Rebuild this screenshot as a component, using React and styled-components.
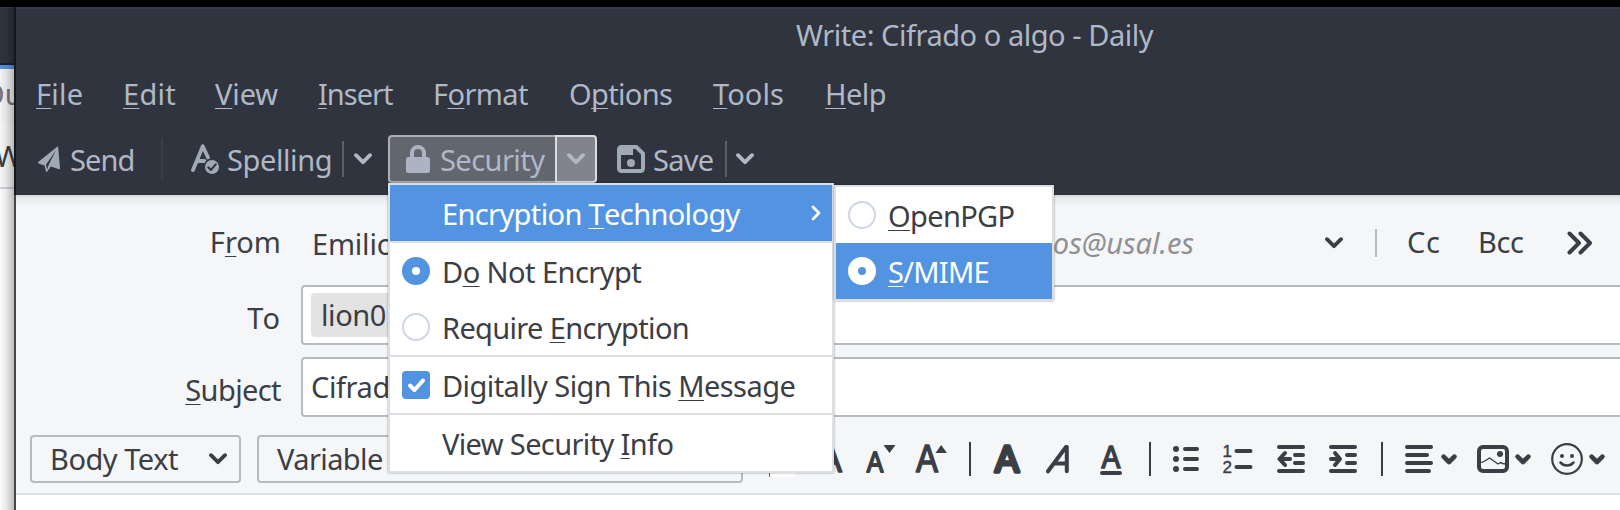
import React from 'react';
import styled, { createGlobalStyle, css } from 'styled-components';

const c = {
  header: '#2f343f', headerText: '#afb8c6', headerIcon: '#a0aab7',
  panel: '#f4f6f8', text: '#3b3e45', border: '#b9babb', line: '#dcdfe3', accent: '#5294e2',
};

const GlobalStyle = createGlobalStyle`
  *, *::before, *::after { box-sizing: border-box; }
  body {
    margin: 0; overflow: hidden; background: #fff;
    font: 400 29px/36px "Noto Sans", "Open Sans", sans-serif;
    color: ${c.text};
  }
  svg { display: block; flex: none; }
`;

const Screen = styled.div`
  display: flex; flex-direction: column;
  width: 1620px; height: 510px; overflow: hidden;
`;
const TopEdge = styled.div`height: 7px; flex: none; background: #000;`;
const Desktop = styled.div`display: flex; flex: 1; min-height: 0; position: relative;`;

const BackWindow = styled.div`
  width: 14px; flex: none; overflow: hidden; position: relative;
  display: flex; flex-direction: column; background: #fbfbfb;
  &::after {
    content: ''; position: absolute; inset: 0;
    background: linear-gradient(90deg, transparent, rgba(0,0,0,.08) 45%, rgba(0,0,0,.25));
  }
`;
const BackHeader = styled.div`
  height: 62px; flex: none; background: ${c.header};
  border-top: 1px solid #3a404c; border-bottom: 4px solid ${c.accent};
  box-shadow: inset 0 -2px #1e222b;
`;
const BackTab = styled.div`
  height: 55px; flex: none; display: flex; align-items: center; text-indent: -18px;
  white-space: nowrap; background: #f4f4f4; color: #74767a; padding-bottom: 6px;
`;
const BackRow = styled.div`
  height: 63px; flex: none; display: flex; align-items: center;
  text-indent: -5px; background: #f7f7f8;
`;
const BackBody = styled.div`flex: 1; border-top: 2px solid #cfd3d8;`;

const Window = styled.main`
  flex: 1; min-width: 0; display: flex; flex-direction: column;
  border-left: 2px solid #464646; background: #fff;
`;
const Header = styled.header`
  height: 188px; flex: none; margin-left: -2px; border-left: 2px solid #14171c;
  background: ${c.header}; color: ${c.headerText};
  box-shadow: inset 0 2px #363d49;
`;
const TitleBar = styled.div`
  height: 53px; display: flex; align-items: center; padding: 2px 0 0 780px;
  letter-spacing: -0.46px; white-space: nowrap;
`;
const MenuBar = styled.nav`height: 65px; display: flex; align-items: center; padding: 3px 0 0 20px;`;
const MenuName = styled.span`width: ${p => p.$w}px; flex: none; letter-spacing: ${p => p.$ls}px;`;
const Key = styled.span`
  text-decoration: underline; text-decoration-thickness: 1px;
  text-underline-offset: 3px; text-decoration-skip-ink: none;
`;
const Toolbar = styled.div`height: 70px; display: flex; align-items: center; padding-bottom: 2px;`;
const ToolButton = styled.div`
  display: flex; align-items: center; flex: none; height: 48px;
  width: ${p => p.$w}px; padding: 2px 0 0 ${p => p.$pad}px; gap: ${p => p.$gap}px;
  letter-spacing: ${p => p.$ls}px;
  svg { color: ${c.headerIcon}; margin-top: -2px; }
  ${p => p.$active && css`
    margin-left: 6px;
    background: #62666f; border: 2px solid #adaeb0; border-right: 0; border-radius: 4px 0 0 4px;
    svg { color: #acb4c4; }
  `}
`;
const DropButton = styled.div`
  display: flex; align-items: center; justify-content: center; flex: none;
  height: 48px; width: ${p => p.$w}px;
  ${p => p.$active && css`background: #81848c; border: 2px solid #dcdddf; border-radius: 0 4px 4px 0;`}
`;
const Rule = styled.div`
  width: 2px; flex: none; height: ${p => p.$h}px; margin-left: ${p => p.$gap || 0}px; background: ${p => p.$color};
`;

const Fields = styled.section`
  height: 222px; flex: none; display: flex; flex-direction: column;
  background: linear-gradient(#d3d5d8, #e6e8ea 3px, ${c.panel} 11px);
`;
const FieldRow = styled.div`
  display: grid; grid-template-columns: 265px 1fr; column-gap: 20px;
  height: ${p => p.$h}px; margin-bottom: ${p => p.$after || 0}px;
`;
const FieldLabel = styled.label`
  align-self: center; text-align: right; padding-top: ${p => p.$drop}px;
  letter-spacing: ${p => p.$ls}px;
`;
const FromLine = styled.div`display: flex; align-items: center; padding-top: 6px;`;
const Identity = styled.div`
  display: flex; align-items: center; width: 1042px; padding-left: 11px;
`;
const Address = styled.span`
  margin: 0 131px 0 auto; font-style: italic; color: #909193;
`;
const PersonName = styled.span`padding-top: 1px; letter-spacing: -0.2px;`;
const ExtraField = styled.span`
  margin: -3px 0 0 ${p => p.$gap}px; width: ${p => p.$w}px; letter-spacing: ${p => p.$ls}px;
`;
const Input = styled.div`
  display: flex; align-items: center; background: #fff; white-space: nowrap;
  border: 2px solid ${c.border}; border-right: 0; border-radius: 4px 0 0 4px;
  padding-left: 8px; letter-spacing: -0.4px;
`;
const Chip = styled.span`
  height: 44px; display: flex; align-items: center; padding: 0 10px;
  background: #e3e3e3; border-radius: 4px; letter-spacing: -0.4px;
`;

const FormatBar = styled.div`
  height: 78px; flex: none; display: flex; align-items: center; padding: 8px 0 0 14px;
  background: ${c.panel}; border-bottom: 2px solid ${c.line};
`;
const Combo = styled.div`
  display: flex; align-items: center; justify-content: space-between; flex: none;
  width: ${p => p.$w}px; height: 48px; margin-right: 16px; padding: 0 12px 0 18px;
  border: 2px solid ${c.border}; border-radius: 4px; letter-spacing: ${p => p.$ls}px;
`;
const Swatch = styled.div`
  width: 26px; height: 30px; margin: 5px 22px 0 10px; flex: none;
  background: #fff; border-left: 1px solid #666;
`;
const Tool = styled.span`flex: none; margin-left: ${p => p.$gap}px;`;

const Popup = styled.div`
  position: absolute; z-index: 2; left: ${p => p.$x}px; top: ${p => p.$y}px; width: ${p => p.$w}px;
  background: #fff; border: 2px solid ${c.line};
  box-shadow: 0 0 2px rgba(0,0,0,.4);
`;
const Option = styled.div`
  height: 56px; display: flex; align-items: center; padding: 1px 11px 0 12px; white-space: nowrap;
  letter-spacing: ${p => p.$ls}px;
  ${p => p.$on && css`background: ${c.accent}; color: #fff;`}
`;
const Slot = styled.span`width: 40px; flex: none; margin-top: -1px;`;
const Divider = styled.div`height: 2px; background: ${c.line};`;
const Radio = styled.span`
  display: flex; align-items: center; justify-content: center;
  width: 28px; height: 28px; border-radius: 50%;
  background: ${p => (p.$checked ? (p.$invert ? '#fff' : c.accent) : '#fff')};
  border: ${p => (p.$checked ? 'none' : '2px solid #cfd6e6')};
  &::after {
    content: ''; width: 8px; height: 8px; border-radius: 50%;
    background: ${p => (p.$checked ? (p.$invert ? c.accent : '#fff') : 'transparent')};
  }
`;
const Check = styled.span`
  display: flex; width: 28px; height: 28px; border-radius: 4px; background: ${c.accent}; color: #fff;
`;
const SubArrow = styled.span`margin: -1px 0 0 auto;`;

const Svg = ({ w, h = 32, sw = 4, children }) => (
  <svg width={w} height={h} viewBox={`0 0 ${w} ${h}`} fill="none" stroke="currentColor"
    strokeWidth={sw} strokeLinecap="round" strokeLinejoin="round">{children}</svg>
);
const Chevron = () => <Svg w={18} h={12} sw={3.8}><path d="M2 2.2l7 7 7-7" /></Svg>;
const SmallChevron = () => <Svg w={16} h={32} sw={4.6}><path d="M2.6 13.6l5.4 5.4 5.4-5.4" /></Svg>;
const LetterA = ({ x, y, size, len, sw = 1.4 }) => (
  <text x={x} y={y} fontFamily='"Liberation Sans", Arial, sans-serif' fontSize={size}
    textLength={len} lengthAdjust="spacingAndGlyphs" fill="currentColor" strokeWidth={sw}>A</text>
);
const Digit = ({ y, children }) => (
  <text x="-.5" y={y} fontFamily='"Liberation Sans", Arial, sans-serif' fontSize="17" fill="currentColor" strokeWidth=".4">{children}</text>
);

const SendIcon = () => (
  <svg width="22" height="28" viewBox="0 0 22 28" fill={c.headerIcon}>
    <path d="M18.6 2.2Q20 .8 20.2 2.8L22 23Q22 24.8 20.4 24L12.8 21.4 9.3 26.6Q8.2 27.4 7.9 26L6.6 20.6 1 18.8Q-.8 18 .8 16.6z" />
    <path d="M18.2 5L8 19.8l1.2 4.6L11 18.9z" fill={c.header} />
  </svg>
);
const SpellIcon = () => (
  <svg width="28" height="30" viewBox="0 0 28 30" fill="none" stroke="currentColor" strokeLinecap="round" strokeLinejoin="round">
    <path d="M2 26L11.8 2.3 17 13.5M6.5 17h7" strokeWidth="3.8" />
    <circle cx="21" cy="23" r="8.4" fill={c.header} stroke="none" />
    <circle cx="21" cy="23" r="7" fill="currentColor" stroke="none" />
    <path d="M17.2 23.2l2.7 2.8 5-5.8" stroke={c.header} strokeWidth="2" />
  </svg>
);
const LockIcon = () => (
  <svg width="24" height="28" viewBox="0 0 24 28" fill="none" stroke="currentColor">
    <path d="M6 13V8a6 6 0 0112 0v5" strokeWidth="4" />
    <rect y="12" width="24" height="16" rx="2.5" fill="currentColor" stroke="none" />
  </svg>
);
const SaveIcon = () => (
  <svg width="28" height="28" viewBox="0 0 28 28" fill="none" stroke="currentColor">
    <path d="M4.5 2h14.8L26 8.5V23.5a2.5 2.5 0 01-2.5 2.5H4.5a2.5 2.5 0 01-2.5-2.5V4.5A2.5 2.5 0 014.5 2z" strokeWidth="4" />
    <path d="M3 3h13v7H3z" fill="currentColor" stroke="none" />
    <circle cx="14" cy="18" r="4" fill="currentColor" stroke="none" />
  </svg>
);

const FormatTools = () => (
  <>
    <Tool $gap={0}><Svg w={26}><LetterA x={1} y={29.3} size={38} len={24} /></Svg></Tool>
    <Tool $gap={23}><Svg w={30}>
      <LetterA x={0.8} y={29} size={29} len={16.5} sw={1.8} />
      <path d="M17.5 2h12l-6 8z" fill="currentColor" stroke="none" />
    </Svg></Tool>
    <Tool $gap={19}><Svg w={32}>
      <LetterA x={1} y={29.3} size={38} len={22} sw={1.6} />
      <path d="M20.5 10h11.5L26.2 2z" fill="currentColor" stroke="none" />
    </Svg></Tool>
    <Rule $h={34} $gap={22} $color={c.text} />
    <Tool $gap={22}><Svg w={28}><LetterA x={2} y={28.8} size={37} len={24} sw={3.6} /></Svg></Tool>
    <Tool $gap={25}><Svg w={24}><path d="M2 28.3L20 4" /><path d="M20.8 4v24.3M9 20.5h11" /></Svg></Tool>
    <Tool $gap={30}><Svg w={22}><LetterA x={1.6} y={25.3} size={32} len={18.8} sw={1.6} /><path d="M2 30h18" /></Svg></Tool>
    <Rule $h={34} $gap={27} $color={c.text} />
    <Tool $gap={22}><Svg w={26}>
      <g fill="currentColor" stroke="none"><circle cx="3" cy="6" r="3" /><circle cx="3" cy="16" r="3" /><circle cx="3" cy="26" r="3" /></g>
      <path d="M12 6h12M12 16h12M12 26h12" />
    </Svg></Tool>
    <Tool $gap={24}><Svg w={30}>
      <Digit y={14}>1</Digit><Digit y={30}>2</Digit>
      <path d="M13.5 8h14M13.5 24h14" />
    </Svg></Tool>
    <Tool $gap={24}><Svg w={28}>
      <path d="M2 4h24M18 12h8M18 20h8M2 28h24" /><path d="M8 10l-5.5 6 5.5 6M4 16h9" />
    </Svg></Tool>
    <Tool $gap={24}><Svg w={28}>
      <path d="M2 4h24M18 12h8M18 20h8M2 28h24" /><path d="M6 10l5 6-5 6M2 16h8" />
    </Svg></Tool>
    <Rule $h={34} $gap={24} $color={c.text} />
    <Tool $gap={22}><Svg w={28}><path d="M2 4h24M2 12h20M2 20h24M2 28h22" /></Svg></Tool>
    <Tool $gap={8}><SmallChevron /></Tool>
    <Tool $gap={20}><Svg w={32}>
      <rect x="2" y="4" width="28" height="24" rx="4" />
      <path d="M3 19.5c4 0 5-2 9.5-4.5l8.5 6 2.5-1.5 2 1 3 .5" strokeWidth="1.4" />
      <circle cx="23" cy="11" r="3" fill="currentColor" stroke="none" />
    </Svg></Tool>
    <Tool $gap={6}><SmallChevron /></Tool>
    <Tool $gap={20}><Svg w={32} sw={2.2}>
      <circle cx="16" cy="16" r="14.8" />
      <circle cx="11" cy="13" r="2" fill="currentColor" stroke="none" /><circle cx="21" cy="13" r="2" fill="currentColor" stroke="none" />
      <path d="M9.5 19.5c3 4 10 4 13 0" strokeWidth="2.6" />
    </Svg></Tool>
    <Tool $gap={6}><SmallChevron /></Tool>
  </>
);

const menus = [
  ['', 'F', 'ile', 87, 0.2], ['', 'E', 'dit', 92, 0.3], ['', 'V', 'iew', 103, -0.1], ['', 'I', 'nsert', 115, -1],
  ['F', 'o', 'rmat', 136, -0.59], ['O', 'p', 'tions', 144, -0.65], ['', 'T', 'ools', 112, 0.1], ['', 'H', 'elp', 70, -0.5],
];

export default function App() {
  return (
    <>
      <GlobalStyle />
      <Screen>
        <TopEdge />
        <Desktop>
          <BackWindow>
            <BackHeader /><BackTab>Ou</BackTab><BackRow>W</BackRow><BackBody />
          </BackWindow>
          <Window>
            <Header>
              <TitleBar>Write: Cifrado o algo - Daily</TitleBar>
              <MenuBar>
                {menus.map(([a, k, b, w, ls]) => (
                  <MenuName key={a + k + b} $w={w} $ls={ls}>{a}<Key>{k}</Key>{b}</MenuName>
                ))}
              </MenuBar>
              <Toolbar>
                <ToolButton $w={145} $pad={22} $gap={10} $ls={-0.9}><SendIcon />Send</ToolButton>
                <Rule $h={40} $color="#3c3f49" />
                <ToolButton $w={179} $pad={28} $gap={8} $ls={-0.4}><SpellIcon />Spelling</ToolButton>
                <Rule $h={36} $color="#5a5f6a" />
                <DropButton $w={38}><Chevron /></DropButton>
                <ToolButton $w={167} $pad={16} $gap={10} $ls={-0.55} $active><LockIcon />Security</ToolButton>
                <DropButton $w={42} $active><Chevron /></DropButton>
                <ToolButton $w={128} $pad={20} $gap={8} $ls={-0.7}><SaveIcon />Save</ToolButton>
                <Rule $h={36} $color="#5a5f6a" />
                <DropButton $w={36}><Chevron /></DropButton>
              </Toolbar>
            </Header>

            <Fields>
              <FieldRow $h={90}>
                <FieldLabel $drop={4} $ls={0}>F<Key>r</Key>om</FieldLabel>
                <FromLine>
                  <Identity>
                    <PersonName>Emilio</PersonName>
                    <Address>os@usal.es</Address>
                    <Chevron />
                  </Identity>
                  <Rule $h={28} $gap={32} $color="#b8babc" />
                  <ExtraField $gap={30} $w={71} $ls={0.6}>Cc</ExtraField>
                  <ExtraField $gap={0} $w={89} $ls={-0.4}>Bcc</ExtraField>
                  <Svg w={26} h={24} sw={4}><path d="M2.5 2.5L12 12l-9.5 9.5M13.5 2.5L23 12l-9.5 9.5" /></Svg>
                </FromLine>
              </FieldRow>
              <FieldRow $h={60} $after={12}>
                <FieldLabel $drop={5} $ls={1}>To</FieldLabel>
                <Input><Chip>lion0</Chip></Input>
              </FieldRow>
              <FieldRow $h={60}>
                <FieldLabel $drop={6} $ls={-0.6}><Key>S</Key>ubject</FieldLabel>
                <Input>Cifrado o algo</Input>
              </FieldRow>
            </Fields>

            <FormatBar>
              <Combo $w={211} $ls={-0.47}>Body Text<Chevron /></Combo>
              <Combo $w={486} $ls={-0.59}>Variable</Combo>
              <Swatch />
              <FormatTools />
            </FormatBar>
          </Window>

          <Popup $x={388} $y={176} $w={446}>
            <Option $on $ls={-0.63}>
              <Slot />Encryption&nbsp;<Key>T</Key>echnology
              <SubArrow><Svg w={10} h={16} sw={2.8}><path d="M2 2l6 6-6 6" /></Svg></SubArrow>
            </Option>
            <Divider />
            <Option $ls={-0.55}><Slot><Radio $checked /></Slot>D<Key>o</Key>&nbsp;Not Encrypt</Option>
            <Option $ls={-0.66}><Slot><Radio /></Slot>Require&nbsp;<Key>E</Key>ncryption</Option>
            <Divider />
            <Option $ls={-0.57}>
              <Slot><Check><Svg w={28} h={28} sw={4}><path d="M8 14.5l4.5 4.5L21 9.5" /></Svg></Check></Slot>
              Digitally Sign This&nbsp;<Key>M</Key>essage
            </Option>
            <Divider />
            <Option $ls={-0.63}><Slot />View Security&nbsp;<Key>I</Key>nfo</Option>
          </Popup>

          <Popup $x={834} $y={178} $w={220}>
            <Option $ls={-0.65}><Slot><Radio /></Slot><Key>O</Key>penPGP</Option>
            <Option $on $ls={-0.73}><Slot><Radio $checked $invert /></Slot><Key>S</Key>/MIME</Option>
          </Popup>
        </Desktop>
      </Screen>
    </>
  );
}
